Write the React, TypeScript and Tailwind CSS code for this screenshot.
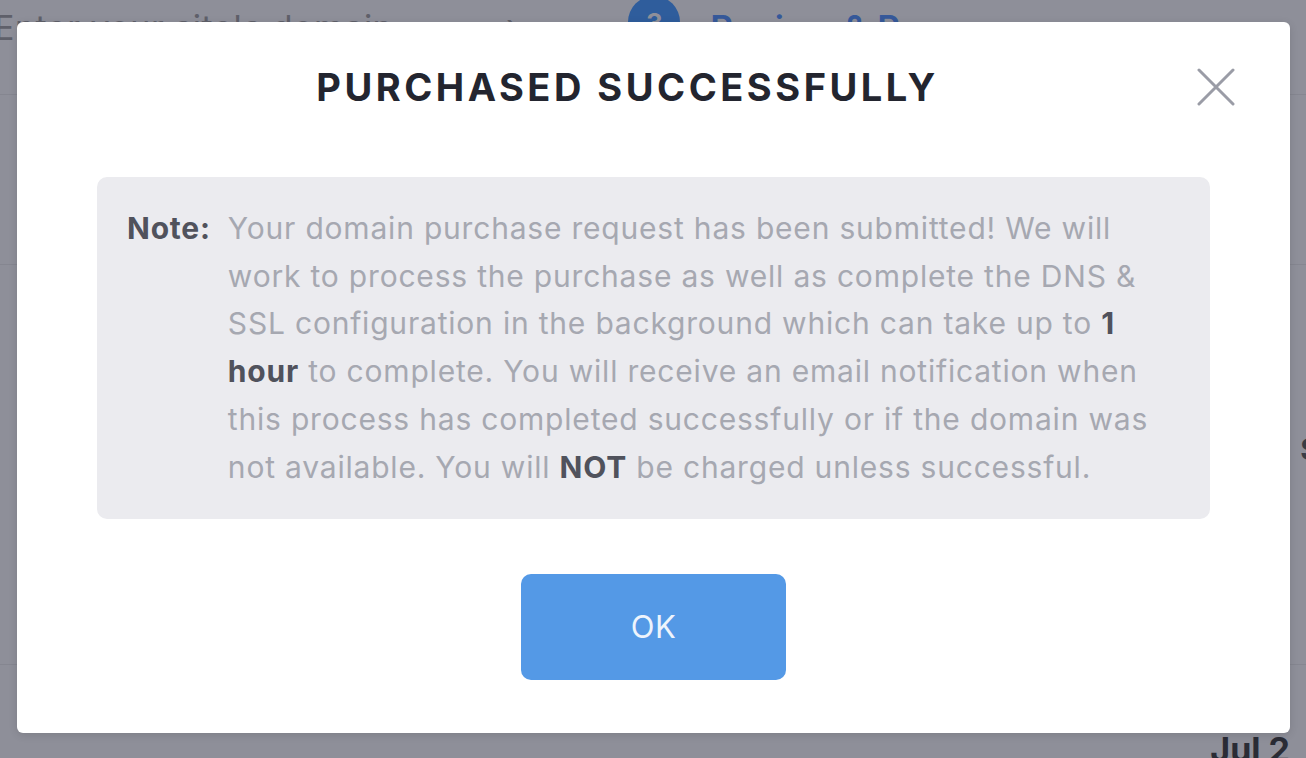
function BackgroundPage() {
  return (
    <div className="h-[758px] w-full overflow-hidden bg-[#8e8f99] font-['Inter',sans-serif]">
      <div className="flex h-[95px] items-start border-b border-[#858690] pt-[2px]">
        <span className="ml-[-6px] w-[420px] text-[34px] tracking-[0.5px] text-[#5f606a]">Enter your site's domain</span>
        <span className="ml-[92px] text-[32px] text-[#5f606a]">›</span>
        <div className="ml-[110px] flex items-start gap-[30px]">
          <span className="mt-[-6px] flex h-[52px] w-[52px] items-center justify-center rounded-full bg-[#2f5d9c] text-[26px] font-bold text-[#8e8f99]">
            3
          </span>
          <span className="text-[35px] font-semibold tracking-[0.5px] text-[#36599a]">Review &amp; Pay</span>
        </div>
      </div>
      <div className="h-[170px] border-b border-[#858690]" />
      <div className="flex h-[400px] items-center justify-end border-b border-[#858690]">
        <span className="mr-[-14px] mt-[-30px] text-[30px] font-bold text-[#3a3c45]">S</span>
      </div>
      <div className="flex h-[92px] items-end justify-end">
        <span className="mr-[16px] mb-[-18px] text-[34px] font-bold text-[#2a2c35]">Jul 2</span>
      </div>
    </div>
  );
}

export default function App() {
  return (
    <div className="relative h-[758px] w-full overflow-hidden">
      <BackgroundPage />
      <div className="absolute left-[17px] top-[22px] flex h-[711px] w-[1273px] flex-col items-center rounded-[6px] bg-white font-['Inter',sans-serif] shadow-[0_2px_8px_rgba(0,0,0,0.12)]">
        <div className="relative flex w-full justify-center pt-[43px] pr-[52px]">
          <h2 className="text-[38px] font-bold leading-[44px] tracking-[3.5px] text-[#23252f]">
            PURCHASED SUCCESSFULLY
          </h2>
          <button className="absolute right-[55px] top-[46px] text-[#9a9ca6]">
            <svg width="38" height="38" viewBox="0 0 38 38" fill="none" stroke="currentColor" strokeWidth="3" strokeLinecap="round">
              <path d="M2 2L36 36M36 2L2 36" />
            </svg>
          </button>
        </div>

        <div className="mt-[68px] flex w-[1113px] gap-[17px] rounded-[10px] bg-[#ebebef] px-[30px] py-[28px] text-[30px] leading-[47.7px] tracking-[0.8px]">
          <span className="font-bold text-[#50525c]">Note:</span>
          <p className="text-[#a6a8b1]">
            Your domain purchase request has been submitted! We will
            <br />
            work to process the purchase as well as complete the DNS &amp;
            <br />
            SSL configuration in the background which can take up to{" "}
            <b className="text-[#50525c]">1</b>
            <br />
            <b className="text-[#50525c]">hour</b> to complete. You will receive an email notification when
            <br />
            this process has completed successfully or if the domain was
            <br />
            not available. You will <b className="text-[#50525c]">NOT</b> be charged unless successful.
          </p>
        </div>

        <button className="mt-[55px] h-[106px] w-[265px] rounded-[10px] bg-[#5499e6] text-[31px] tracking-[0.5px] text-[#eef4fc]">
          OK
        </button>
      </div>
    </div>
  );
}
